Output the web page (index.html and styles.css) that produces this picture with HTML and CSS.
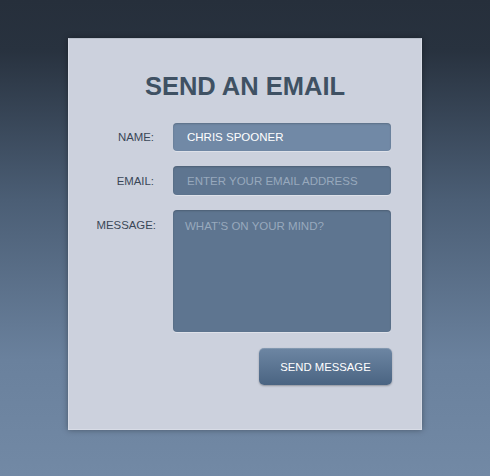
FILE: index.html
```html
<!DOCTYPE html>
<html>
<head>
<meta charset="utf-8">
<link rel="stylesheet" href="styles.css">
</head>
<body>
<div class="page">
  <form class="card">
    <h1 class="title">SEND AN EMAIL</h1>
    <div class="fields">
      <label class="label" for="name">NAME:</label>
      <input class="field field-name" id="name" type="text" value="CHRIS SPOONER">
      <label class="label" for="email">EMAIL:</label>
      <input class="field field-dark" id="email" type="text" placeholder="ENTER YOUR EMAIL ADDRESS">
      <label class="label label-top" for="msg">MESSAGE:</label>
      <textarea class="field field-dark area" id="msg" placeholder="WHAT’S ON YOUR MIND?"></textarea>
      <div class="actions">
        <button class="send" type="button">SEND MESSAGE</button>
      </div>
    </div>
  </form>
</div>
</body>
</html>
```

FILE: styles.css
```css
html, body {
  margin: 0;
  padding: 0;
  height: 100%;
}
body {
  background: linear-gradient(to bottom, #262f3b 0px, #28323f 50px, #4b5e75 200px, #6a819d 360px, #7289a5 476px);
  font-family: "Liberation Sans", Arial, sans-serif;
}
.page {
  display: flex;
  justify-content: center;
  padding-top: 38px;
}
.card {
  width: 354px;
  height: 392px;
  box-sizing: border-box;
  background: #ccd1dd;
  border: 1px solid #d8dce6;
  border-top-color: #b9c0cc;
  box-shadow: 0 0 6px rgba(0, 0, 0, 0.35);
  padding-top: 31px;
}
.title {
  margin: 0 0 21px 0;
  text-align: center;
  font-size: 25.5px;
  line-height: 32px;
  font-weight: bold;
  color: #3f5163;
}
.fields {
  display: grid;
  grid-template-columns: 85px 218px;
  column-gap: 19px;
  row-gap: 15px;
  align-items: center;
}
.label {
  text-align: right;
  font-size: 11.4px;
  color: #3a4757;
}
.label-top {
  align-self: start;
  padding-top: 9px;
  margin-right: -2px;
}
.field {
  box-sizing: border-box;
  width: 218px;
  height: 29px;
  margin: 0;
  border: 0;
  border-radius: 4px;
  padding: 0 14px;
  font-family: "Liberation Sans", Arial, sans-serif;
  font-size: 11.5px;
  color: #ffffff;
  outline: none;
  box-shadow: inset 0 1px 2px rgba(0, 0, 0, 0.2), 0 1px 0 rgba(255, 255, 255, 0.35);
}
.field-name {
  background: #7189a6;
  height: 28px;
}
.field-dark {
  background: #5e7590;
}
.field::placeholder {
  color: #98a9bd;
  opacity: 1;
}
.area {
  height: 122px;
  resize: none;
  padding: 9px 12px;
  line-height: 14px;
  display: block;
}
.actions {
  grid-column: 2;
  display: flex;
  justify-content: flex-end;
  margin-top: 1px;
  margin-right: -1px;
}
.send {
  width: 133px;
  height: 37px;
  border: 0;
  border-radius: 5px;
  background: linear-gradient(to bottom, #6d86a3, #4a6482);
  color: #ffffff;
  font-family: "Liberation Sans", Arial, sans-serif;
  font-size: 11.3px;
  box-shadow: 0 1px 2px rgba(0, 0, 0, 0.3), inset 0 1px 0 rgba(255, 255, 255, 0.15);
  padding: 0;
}
```
